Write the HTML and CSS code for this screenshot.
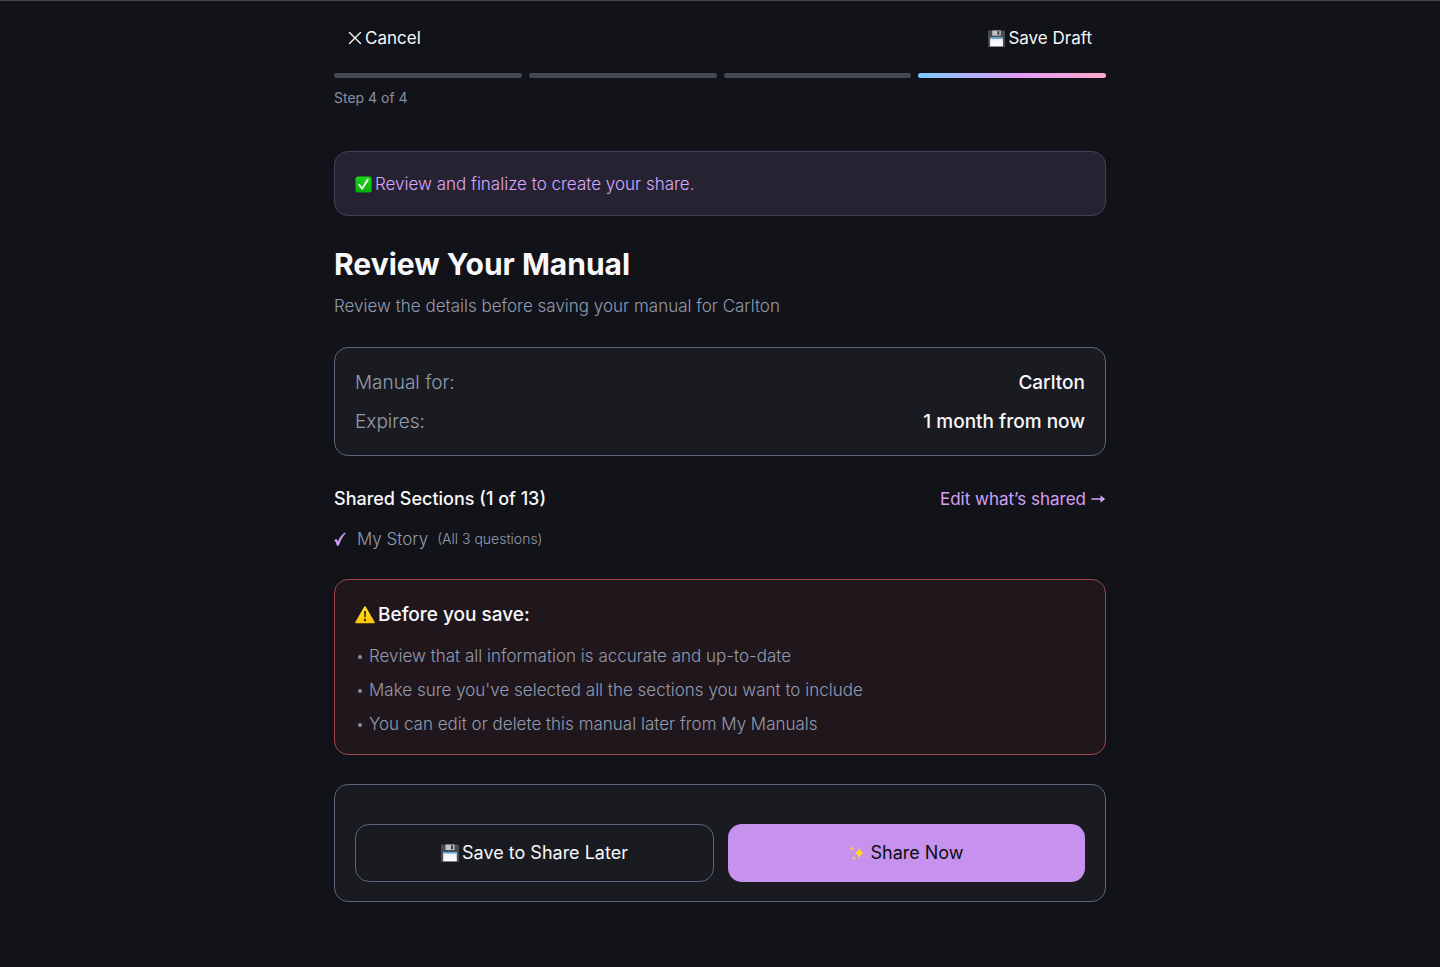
FILE: index.html
```html
<!DOCTYPE html>
<html lang="en">
<head>
    <meta charset="UTF-8">
    <meta name="viewport" content="width=device-width, initial-scale=1.0">
    <title>Review Your Manual</title>
    <link rel="stylesheet" href="styles.css">
</head>
<body>
    <svg class="sprite" aria-hidden="true">
        <defs>
            <linearGradient id="label-fill" x1="0" y1="0" x2="0" y2="1">
                <stop offset="0" stop-color="#e9eef3"/>
                <stop offset="1" stop-color="#ffffff"/>
            </linearGradient>
            <linearGradient id="check-fill" x1="0" y1="0" x2="0" y2="1">
                <stop offset="0" stop-color="#1fd421"/>
                <stop offset="1" stop-color="#03b008"/>
            </linearGradient>
            <linearGradient id="warn-fill" x1="0" y1="0" x2="0" y2="1">
                <stop offset="0" stop-color="#ffe02e"/>
                <stop offset="1" stop-color="#fdc500"/>
            </linearGradient>
        </defs>
        <symbol id="floppy" viewBox="0 0 18 18">
            <path d="M0 .5h17l1 1V18H0z" fill="#4a4b4e"/>
            <path d="M4.500 .5h9v5.500h-9z" fill="#c3c5c8"/>
            <path d="M10 1.200h2v4h-2z" fill="#3b3c3f"/>
            <path d="M2.200 8h13.600v9.300H2.200z" fill="url(#label-fill)"/>
            <path d="M2.200 8h13.600v1.500H2.200z" fill="#58a9e0"/>
        </symbol>
    </svg>

    <main class="page">
        <header class="toolbar">
            <button type="button" class="link-btn">
                <svg class="icon-close" viewBox="0 0 14 14" aria-hidden="true"><path d="M1.500 1.500l11 11M12.500 1.500l-11 11" stroke="currentColor" stroke-width="1.400" stroke-linecap="round"/></svg>
                Cancel
            </button>
            <button type="button" class="link-btn">
                <svg class="icon-small" aria-hidden="true"><use href="#floppy"/></svg>
                Save Draft
            </button>
        </header>

        <div class="progress">
            <span class="bar"></span>
            <span class="bar"></span>
            <span class="bar"></span>
            <span class="bar active"></span>
        </div>
        <p class="step">Step 4 of 4</p>

        <div class="banner">
            <svg class="icon-small" viewBox="0 0 18 18" aria-hidden="true">
                <rect x=".5" y=".5" width="17" height="17" rx="3" fill="url(#check-fill)"/>
                <path d="M4.500 9.300l3 4.200L13.500 4" fill="none" stroke="#fff" stroke-width="2" stroke-linecap="round" stroke-linejoin="round"/>
            </svg>
            Review and finalize to create your share.
        </div>

        <h1>Review Your Manual</h1>
        <p class="subtitle">Review the details before saving your manual for Carlton</p>

        <dl class="card details">
            <div class="row">
                <dt>Manual for:</dt>
                <dd>Carlton</dd>
            </div>
            <div class="row">
                <dt>Expires:</dt>
                <dd>1 month from now</dd>
            </div>
        </dl>

        <section class="sections">
            <div class="sections-head">
                <h2>Shared Sections (1 of 13)</h2>
                <a href="#">Edit what’s shared
                    <svg class="icon-arrow" viewBox="0 0 15 12" aria-hidden="true"><path d="M1 6h10" stroke="currentColor" stroke-width="1.600" stroke-linecap="round"/><path d="M9.500 2.200L14.200 6l-4.700 3.800z" fill="currentColor"/></svg>
                </a>
            </div>
            <ul class="section-list">
                <li>
                    <svg class="icon-tick" viewBox="0 0 12 14" aria-hidden="true"><path d="M.5 8.300l1.700-1.100c.8.700 1.300 1.700 1.700 2.800C5.300 6.500 7.500 3.200 10.800.8l.5.500C8.500 4.500 6.300 8.400 4.700 13.200l-1.600.3C2.700 11.300 1.800 9.500.5 8.300z" fill="currentColor" stroke="currentColor" stroke-width=".5"/></svg>
                    My Story
                    <span class="count">(All 3 questions)</span>
                </li>
            </ul>
        </section>

        <section class="card warning">
            <h3>
                <svg class="icon-warn" viewBox="0 0 20 18" aria-hidden="true">
                    <path d="M10 1L19 16.500H1z" fill="url(#warn-fill)" stroke="url(#warn-fill)" stroke-width="1.500" stroke-linejoin="round"/>
                    <path d="M9 5h2l-.4 6.500H9.400z" fill="#33280a"/>
                    <circle cx="10" cy="14" r="1.200" fill="#33280a"/>
                </svg>
                Before you save:
            </h3>
            <ul>
                <li>Review that all information is accurate and up-to-date</li>
                <li>Make sure you've selected all the sections you want to include</li>
                <li>You can edit or delete this manual later from My Manuals</li>
            </ul>
        </section>

        <div class="card actions">
            <button type="button" class="btn btn-outline">
                <svg class="icon" aria-hidden="true"><use href="#floppy"/></svg>
                Save to Share Later
            </button>
            <button type="button" class="btn btn-primary">
                <svg class="icon" viewBox="0 0 18 18" aria-hidden="true">
                    <path d="M10.300 2c.6 4.300 1.500 5.900 4.700 7-3.200 1.100-4.100 2.700-4.700 7-.6-4.300-1.500-5.900-4.700-7 3.200-1.100 4.100-2.700 4.700-7z" fill="#ffd51e"/>
                    <path d="M3 1.500c.3 1.900.8 2.600 2.500 3-1.700.4-2.200 1.100-2.500 3-.3-1.900-.8-2.600-2.500-3 1.700-.4 2.200-1.100 2.500-3z" fill="#ffc83a"/>
                    <path d="M5 11.500c.3 1.700.7 2.300 2.200 2.700-1.500.4-1.900 1-2.200 2.700-.3-1.700-.7-2.300-2.200-2.700 1.500-.4 1.900-1 2.200-2.700z" fill="#ffc83a"/>
                </svg>
                Share Now
            </button>
        </div>
    </main>
</body>
</html>
```
FILE: styles.css
```css
* {
    box-sizing: border-box;
    margin: 0;
    padding: 0;
}
body {
    min-height: 100vh;
    background-color: #121318;
    border-top: 1px solid #46474b;
    color: #f8f8fa;
    font-family: Inter, "Liberation Sans", sans-serif;
    font-size: 17px;
    line-height: 24px;
}
button {
    font: inherit;
    color: inherit;
    background: none;
    border: none;
    cursor: pointer;
}
ul {
    list-style: none;
}
.sprite {
    position: absolute;
    width: 0;
    height: 0;
}
.page {
    max-width: 772px;
    margin: 0 auto;
    padding-bottom: 32px;
}
.icon {
    width: 18px;
    height: 18px;
}
.icon-small {
    width: 17px;
    height: 17px;
}
.icon-close {
    width: 14px;
    height: 14px;
}
.icon-arrow {
    width: 15px;
    height: 12px;
}
.icon-tick {
    width: 12px;
    height: 14px;
    margin-right: 8px;
    color: #d9a0ff;
}
.icon-warn {
    width: 20px;
    height: 18px;
}

/* top bar and progress */
.toolbar {
    display: flex;
    justify-content: space-between;
    padding: 25px 14px 23px;
}
.link-btn {
    display: flex;
    align-items: center;
    gap: 3px;
}
.progress {
    display: flex;
    gap: 7px;
}
.bar {
    flex: 1;
    height: 5px;
    border-radius: 3px;
    background-color: #434854;
}
.bar.active {
    background: linear-gradient(90deg, #7cc8ff, #e29cf8 55%, #ffa8c8);
}
.step {
    margin-top: 8px;
    color: #8790a3;
    font-size: 14px;
}

.banner {
    display: flex;
    align-items: center;
    gap: 3px;
    margin-top: 41px;
    padding: 20px 20px 19px;
    border: 1px solid #45405a;
    border-radius: 14px;
    background-color: #252331;
    color: #dba6ff;
    font-weight: 300;
}
h1 {
    margin-top: 28px;
    font-size: 30px;
    line-height: 40px;
    font-weight: 700;
}
.subtitle {
    margin-top: 10px;
    color: #929bb0;
    font-weight: 300;
}

.card {
    border: 1px solid #5b657b;
    border-radius: 14px;
    background-color: #1a1b20;
}
.details {
    margin-top: 29px;
    padding: 20px 20px 19px;
}
.row {
    display: flex;
    justify-content: space-between;
    font-size: 19px;
    line-height: 29px;
}
.row + .row {
    margin-top: 10px;
}
.row dt {
    color: #929bb0;
    font-weight: 300;
}
.row dd {
    font-weight: 500;
}

.sections {
    margin-top: 31px;
}
.sections-head {
    display: flex;
    justify-content: space-between;
    align-items: center;
}
h2 {
    font-size: 18px;
    line-height: 24px;
    font-weight: 500;
}
.sections-head a {
    display: flex;
    align-items: center;
    gap: 5px;
    color: #d5a0f8;
    text-decoration: none;
}
.section-list li {
    display: flex;
    align-items: center;
    gap: 3px;
    margin-top: 16px;
    color: #929bb0;
    font-weight: 300;
}
.count {
    margin-left: 6px;
    font-size: 14px;
}

.warning {
    margin-top: 28px;
    padding: 21px 20px 13px;
    border-color: #a0434c;
    background-color: #20171d;
}
.warning h3 {
    display: flex;
    align-items: center;
    gap: 3px;
    font-size: 19px;
    line-height: 28px;
    font-weight: 500;
}
.warning ul {
    margin-top: 10px;
}
.warning li {
    display: flex;
    align-items: center;
    color: #929bb0;
    font-weight: 300;
    line-height: 34px;
}
.warning li::before {
    content: "";
    width: 4px;
    height: 4px;
    margin: 2px 7px 0 3px;
    border-radius: 50%;
    background-color: #8790a3;
}

.actions {
    display: flex;
    gap: 14px;
    margin-top: 29px;
    padding: 39px 20px 19px;
}
.btn {
    flex: 1;
    display: flex;
    justify-content: center;
    align-items: center;
    gap: 3px;
    height: 58px;
    border-radius: 14px;
    font-size: 18px;
}
.btn-outline {
    border: 1px solid #5b657b;
}
.btn-primary {
    background-color: #c792ee;
    color: #0c0c10;
}
```
